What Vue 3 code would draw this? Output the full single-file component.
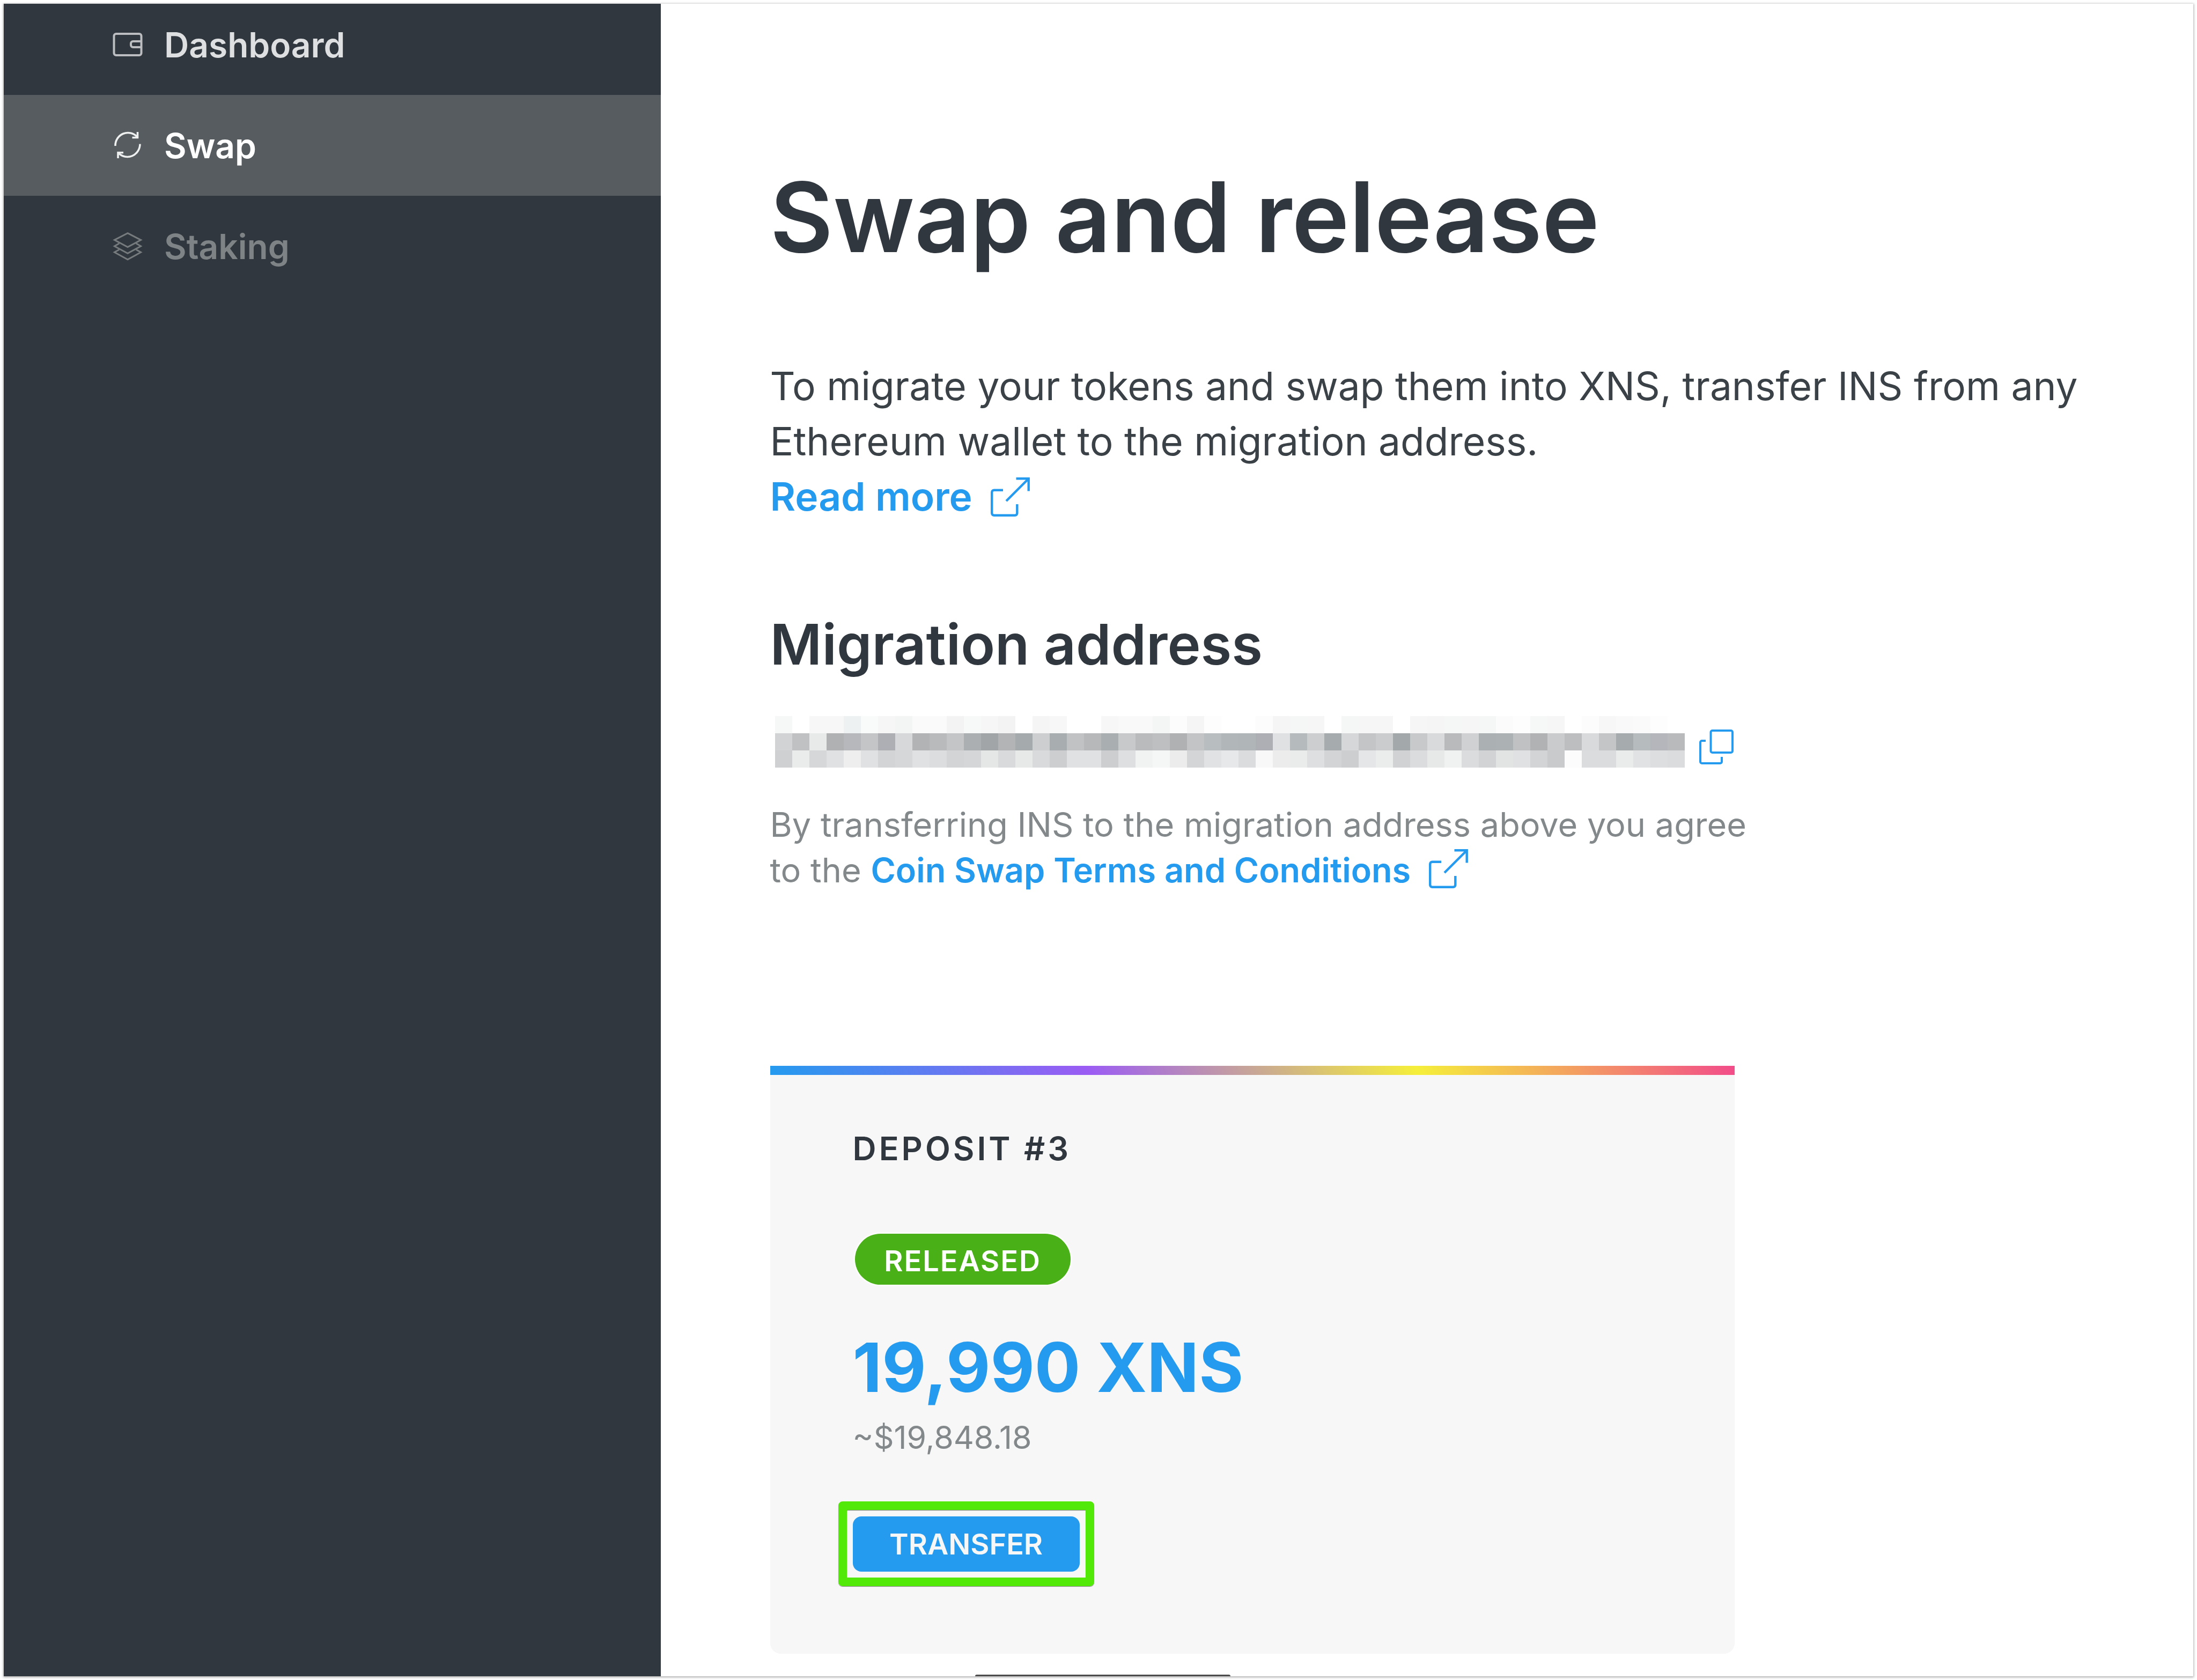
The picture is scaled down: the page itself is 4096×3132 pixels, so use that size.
<script setup>
const nav = [
  { label: 'Dashboard', icon: 'wallet', state: '' },
  { label: 'Swap', icon: 'swap', state: 'active' },
  { label: 'Staking', icon: 'layers', state: 'muted' },
]

// Colours of the obscured address, one row of cells per line
const addressRows = [
  'f6f8f8 ffffff f7f7f7 f7f7f7 eef1f1 f9fbfb f6f6f6 f3f5f5 fafafa fafafa f3f3f3 f7f9f8 f6f6f6 f3f3f3 ffffff f5f5f5 f7f7f7 ffffff ffffff f7f7f7 f9f9f9 f9f9f9 f3f6f5 fcfcfc f5f5f5 fdfdfd ffffff ffffff fcfcfc f5f5f5 f5f7f6 f6f6f6 ffffff f5f7f6 f6f6f6 f6f6f6 ffffff f6f6f6 f5f5f5 f5f7f6 f6f6f6 f5f7f6 fbfbfb fdfdfd f5f8f7 f6f6f6 ffffff fcfcfc f7f7f7 f9f9f9 fafafa fdfdfd ffffff',
  'd1d3d5 c0c1c3 e8eae9 b0b1b3 b7b8bb c4c5c7 aeafb4 d7d8da b2b3b5 b9babc c4c5c7 abafb2 a1a5a8 b3b4b6 a5aaad cdced0 a8adb0 c1c2c4 b7b8ba a9aeb1 c8c9cb babbbd bebfc1 b0b1b3 c3c4c6 b8bdc0 b1b6b9 b0b5b8 aeafb4 e0e1e3 b5babd cdced0 a6abae d6d7d9 c4c5c7 cbccce a3a8ab c8c9cb d9dadc b9babc d0d1d3 abb0b3 acb1b4 c0c1c3 b1b2b4 cacbcd bdbec0 d9dadc c4c5c7 a6abae b6bbbe b5b6bb b9babc',
  'cfd0d2 eaeceb d6d7d9 e0e1e3 eeeeee e0e1e3 d3d4d6 d6d7d9 e0e1e3 dcdddf d3d4d6 d5d6d8 e5e7e6 d9dadc e7e9e8 d9dadc cdced0 e0e1e3 e0e1e3 cdced0 dedfe1 f0f3f2 f5f7f6 ececec d4d5d7 e1e2e4 e7e8ea dbdcde f8f8f8 ececec eaeceb dedfe1 d3d4d6 cdced0 e5e6e8 ebedec d1d2d4 dbdcde e7e9e8 f0f2f1 dbdcde d2d3d5 e2e4e3 e0e1e3 d3d4d6 c9cacc fcfcfc dbdcde dbdcde eaeceb e1e2e4 dddee0 dbdcde',
].map((row) => row.split(' '))
</script>

<template>
  <div class="page">
    <div class="frame">
      <nav class="sidebar">
        <a v-for="item in nav" :key="item.label" href="#" class="nav-item" :class="item.state">
          <svg class="nav-icon" viewBox="0 0 56 56" fill="none" stroke="currentColor" aria-hidden="true">
            <g v-if="item.icon === 'wallet'" stroke-width="4">
              <rect x="2.5" y="8" width="51" height="40" rx="4" />
              <path d="M53 22H38a4 4 0 0 0-4 4v3a4 4 0 0 0 4 4h15" />
            </g>
            <g v-else-if="item.icon === 'swap'" stroke-width="3.6">
              <path d="M5 29A23.5 24 0 0 1 45.6 12" />
              <path d="M46.5 3v10.5H36.5" />
              <path d="M51 25.5A23.5 24 0 0 1 11 42.5" />
              <path d="M10 52V41.5h10" />
            </g>
            <g v-else stroke-width="3">
              <path d="M28 3.7 52.6 16.4 28 29.6 3.4 16.4Z" />
              <path d="M12.3 22.7 3.4 28 28 41.2 52.6 28 43.7 22.7" />
              <path d="M12.3 34.3 3.4 39.3 28 52.8 52.6 39.3 43.7 34.3" />
            </g>
          </svg>
          <span>{{ item.label }}</span>
        </a>
      </nav>

      <main class="content">
        <h1>Swap and release</h1>

        <p class="intro">
          To migrate your tokens and swap them into XNS, transfer INS from any<br />
          Ethereum wallet to the migration address.<br />
          <a href="#" class="link">Read more<svg class="external" viewBox="0 0 73 73" fill="none" stroke="currentColor" stroke-width="4.4" aria-hidden="true">
            <path d="M23 23.7H6.2a4 4 0 0 0-4 4V66.8a4 4 0 0 0 4 4H45.3a4 4 0 0 0 4-4V50" />
            <path d="M47.5 2.2H70.7V25.5M29 44 70 3" />
          </svg></a>
        </p>

        <h2>Migration address</h2>

        <div class="address">
          <svg class="address-value" viewBox="0 0 53 3" preserveAspectRatio="none" shape-rendering="crispEdges" role="img" aria-label="Hidden address">
            <template v-for="(row, y) in addressRows" :key="y">
              <rect v-for="(color, x) in row" :key="x" :x="x" :y="y" width="1" height="1" :fill="'#' + color" />
            </template>
          </svg>
          <button type="button" class="copy" aria-label="Copy address">
            <svg viewBox="0 0 64 65" fill="none" stroke="currentColor" stroke-width="4" aria-hidden="true">
              <rect x="21.5" y="2" width="40.5" height="41" rx="3" />
              <path d="M12 21H5a3 3 0 0 0-3 3V60a3 3 0 0 0 3 3H39a3 3 0 0 0 3-3V51" />
            </svg>
          </button>
        </div>

        <p class="terms">
          By transferring INS to the migration address above you agree<br />
          to the
          <a href="#" class="link">Coin Swap Terms and Conditions<svg class="external" viewBox="0 0 73 73" fill="none" stroke="currentColor" stroke-width="4.4" aria-hidden="true">
            <path d="M23 23.7H6.2a4 4 0 0 0-4 4V66.8a4 4 0 0 0 4 4H45.3a4 4 0 0 0 4-4V50" />
            <path d="M47.5 2.2H70.7V25.5M29 44 70 3" />
          </svg></a>
        </p>

        <section class="card">
          <h3>DEPOSIT #3</h3>
          <span class="badge">RELEASED</span>
          <strong class="amount">19,990 XNS</strong>
          <span class="fiat">~$19,848.18</span>
          <button type="button" class="transfer">TRANSFER</button>
        </section>

        <div class="drawer-edge"></div>
      </main>
    </div>
  </div>
</template>

<style>
body {
  margin: 0;
  background: #fff;
}
</style>

<style scoped>
* {
  box-sizing: border-box;
}

.page {
  display: flex;
  min-height: 100vh;
  padding: 7px;
  font-family: Inter, "Open Sans", sans-serif;
  color: #30373e;
}

.frame {
  display: flex;
  flex: 1;
  box-shadow: 0 1px 4px 1px rgba(0, 0, 0, 0.32);
}

.sidebar {
  flex: 0 0 30%;
  background: #30373e;
}

.nav-item {
  display: flex;
  align-items: center;
  gap: 40px;
  height: 188px;
  padding-left: 203px;
  font-size: 64px;
  font-weight: 600;
  color: #dedfe1;
  text-decoration: none;
}

.nav-item:first-child {
  height: 170px;
  padding-bottom: 18px;
}

.nav-item.active {
  background: #575c60;
  color: #fff;
}

.nav-item.muted {
  color: #7e8386;
}

.nav-icon {
  width: 56px;
  height: 56px;
  opacity: 0.8;
}

.active .nav-icon,
.muted .nav-icon {
  opacity: 0.9;
}

.content {
  display: flex;
  flex: 1;
  flex-direction: column;
  align-items: flex-start;
  padding: 298px 0 0 204px;
  background: #fff;
}

h1,
h2,
h3,
p {
  margin: 0;
}

h1 {
  font-size: 181px;
  font-weight: 600;
  line-height: 200px;
}

.intro {
  margin-top: 163px;
  font-size: 73px;
  line-height: 103px;
  color: #3a4147;
  white-space: nowrap;
}

.link {
  font-weight: 600;
  color: #249bee;
  text-decoration: none;
}

.external {
  width: 73px;
  height: 73px;
  margin-left: 34px;
  vertical-align: -11px;
}

h2 {
  margin-top: 164px;
  font-size: 105px;
  font-weight: 600;
  line-height: 120px;
}

.address {
  display: flex;
  align-items: flex-start;
  margin: 74px 0 0 9px;
}

.address-value {
  width: 1696px;
  height: 96px;
}

.copy {
  margin: 25px 0 0 27px;
  padding: 0;
  border: 0;
  background: none;
  color: #249bee;
}

.copy svg {
  display: block;
  width: 64px;
  height: 65px;
}

.terms {
  margin-top: 64px;
  font-size: 63px;
  line-height: 85px;
  color: #83888b;
  white-space: nowrap;
}

.card {
  display: flex;
  flex-direction: column;
  align-items: flex-start;
  width: 100%;
  max-width: 1798px;
  margin-top: 322px;
  padding: 118px 154px 153px;
  border-radius: 0 0 20px 20px;
  background:
    linear-gradient(64deg, #249bee, #9b5cf4 33%, #f5ef3a 67%, #f24c8a) top / 100% 17px no-repeat,
    #f7f7f7;
}

h3 {
  font-size: 61px;
  font-weight: 600;
  line-height: 72px;
  letter-spacing: 5px;
}

.badge {
  display: flex;
  justify-content: center;
  align-items: center;
  width: 402px;
  height: 95px;
  margin: 123px 0 0 4px;
  padding-top: 6px;
  border-radius: 48px;
  background: #4ab017;
  box-shadow: 0 0 3px 2px #fff;
  color: #fff;
  font-size: 54px;
  font-weight: 600;
  letter-spacing: 2px;
}

.amount {
  margin-top: 84px;
  font-size: 127px;
  font-weight: 700;
  line-height: 140px;
  color: #249bee;
}

.fiat {
  margin-top: 25px;
  font-size: 59px;
  line-height: 72px;
  color: #83888b;
}

.transfer {
  position: relative;
  width: 423px;
  height: 103px;
  margin-top: 111px;
  padding: 0;
  border: 0;
  border-radius: 16px;
  background: #249bee;
  color: #f7f7f7;
  font-family: inherit;
  font-size: 54px;
  font-weight: 600;
}

.transfer::after {
  content: "";
  position: absolute;
  inset: -28px -27px -27px;
  border: 16px solid #52e807;
  border-radius: 8px;
  box-shadow: 0 1px 1px rgba(0, 0, 0, 0.5), inset 0 1px 1px rgba(0, 0, 0, 0.5);
}

.drawer-edge {
  width: 476px;
  height: 3px;
  margin: auto 0 0 382px;
  border-radius: 8px 8px 0 0;
  background: #4c4c4c;
}
</style>
